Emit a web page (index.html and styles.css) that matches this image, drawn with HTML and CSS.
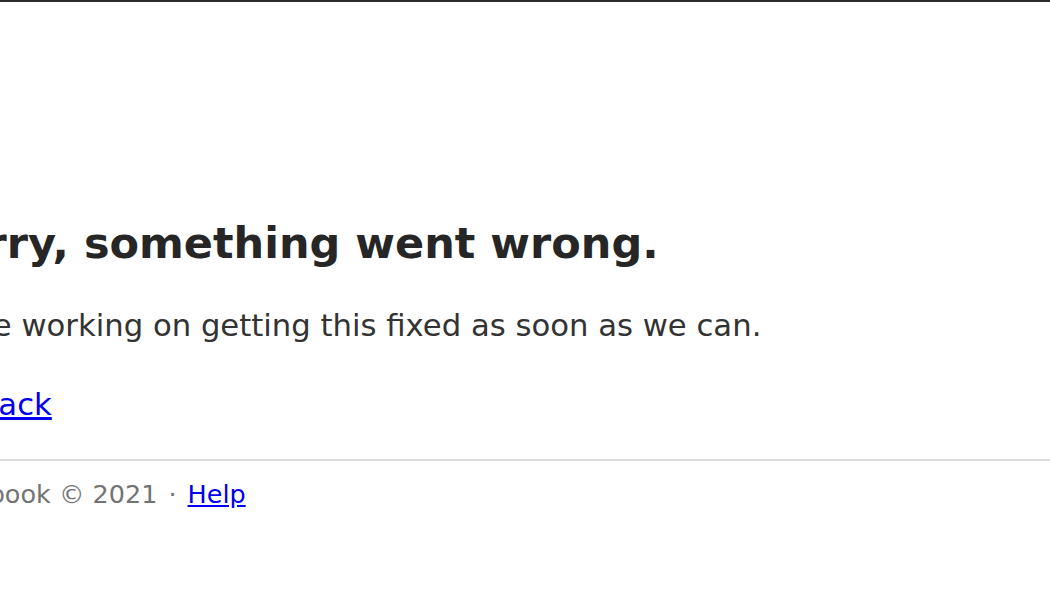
FILE: index.html
```html
<!DOCTYPE html>
<html lang="en">
<head>
    <meta charset="UTF-8">
    <meta name="viewport" content="width=device-width, initial-scale=1.0">
    <title>Error</title>
    <link rel="stylesheet" href="styles.css">
</head>
<body>
    <div class="page">
        <div class="content">
            <h1>Sorry, something went wrong.</h1>
            <p class="message">We're working on getting this fixed as soon as we can.</p>
            <p class="back"><a href="#">Go Back</a></p>
        </div>
        <div class="footer">
            Facebook © 2021<span class="dot">·</span><a href="#">Help</a>
        </div>
    </div>
</body>
</html>
```

FILE: styles.css
```css
body {
    margin: 0;
    background-color: #fff;
    border-top: 2px solid #2d2d2d;
    font-family: "DejaVu Sans", Verdana, sans-serif;
    overflow: hidden;
}

.page {
    margin-left: -75px;
    width: calc(100% + 75px);
}

.content {
    padding-top: 215px;
}

h1 {
    margin: 0;
    font-size: 43px;
    line-height: 52px;
    font-weight: bold;
    color: #262626;
}

.message {
    margin: 37px 0 0;
    font-size: 30.7px;
    line-height: 40px;
    color: #333;
}

.back {
    margin: 39px 0 0;
    font-size: 30.7px;
    line-height: 40px;
}

a {
    color: #0000ee;
}

.footer {
    margin-top: 34px;
    padding: 16px 0 0 6px;
    border-top: 2px solid #dcdcdc;
    font-size: 25.5px;
    line-height: 34px;
    color: #737373;
}

.dot {
    margin: 0 11px;
}
```
